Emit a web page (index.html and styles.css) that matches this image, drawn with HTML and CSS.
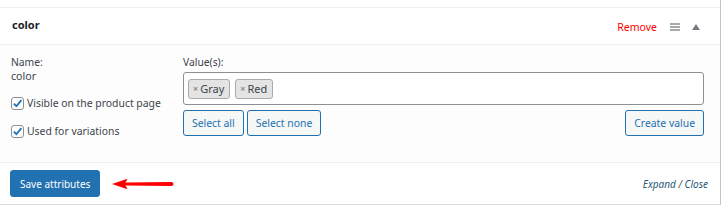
FILE: index.html
```
<!DOCTYPE html>
<html lang="en">
<head>
    <meta charset="UTF-8">
    <title>Product attributes</title>
    <link rel="stylesheet" href="styles.css">
</head>
<body>
    <div class="panel">
        <div class="prev-row"></div>

        <div class="attr">
            <div class="attr-head">
                <strong>color</strong>
                <div class="head-actions">
                    <a class="remove" href="#">Remove</a>
                    <span class="handle">
                        <svg width="10" height="8" viewBox="0 0 10 8"><rect y="0" width="10" height="2" fill="#a7aaad"/><rect y="3" width="10" height="2" fill="#a7aaad"/><rect y="6" width="10" height="2" fill="#a7aaad"/></svg>
                    </span>
                    <span class="toggle">
                        <svg width="8" height="6" viewBox="0 0 8 6"><path d="M4 0 L8 6 L0 6 Z" fill="#787c82"/></svg>
                    </span>
                </div>
            </div>

            <div class="attr-body">
                <div class="col-name">
                    <label class="lbl">Name:</label>
                    <div class="name-val">color</div>
                    <label class="check"><span class="box"><svg width="11" height="11" viewBox="0 0 12 12"><path d="M2 6.2 L4.8 9 L10.2 2.4" fill="none" stroke="#2271b1" stroke-width="2"/></svg></span>Visible on the product page</label>
                    <label class="check"><span class="box"><svg width="11" height="11" viewBox="0 0 12 12"><path d="M2 6.2 L4.8 9 L10.2 2.4" fill="none" stroke="#2271b1" stroke-width="2"/></svg></span>Used for variations</label>
                </div>
                <div class="col-values">
                    <label class="lbl">Value(s):</label>
                    <div class="select-box">
                        <span class="tag"><span class="x">×</span>Gray</span>
                        <span class="tag"><span class="x">×</span>Red</span>
                    </div>
                    <div class="value-actions">
                        <button class="btn">Select all</button>
                        <button class="btn">Select none</button>
                        <button class="btn push">Create value</button>
                    </div>
                </div>
            </div>
        </div>

        <div class="toolbar">
            <button class="btn-primary">Save attributes</button>
            <svg class="arrow" width="64" height="12" viewBox="0 0 66 12"><path d="M1 6 L17 0.5 L15 4.5 L62 4 Q64.5 4 64.5 6 Q64.5 8 62 8 L15 7.5 L17 11.5 Z" fill="#f00"/></svg>
            <span class="expand"><a href="#">Expand</a> / <a href="#">Close</a></span>
        </div>
    </div>
</body>
</html>
```

FILE: styles.css
```
body {
    margin: 0;
    background: #fff;
    font-family: "Noto Sans", "Open Sans", sans-serif;
    font-size: 10.3px;
    color: #3c434a;
}
.panel {
    width: 720px;
    border-right: 1px solid #c3c4c7;
    border-bottom: 1px solid #dcdcde;
    height: 204px;
}
.prev-row {
    height: 7px;
    border-bottom: 1px solid #eee;
}
.attr-head {
    height: 36px;
    display: flex;
    align-items: center;
    justify-content: space-between;
    padding: 0 12px 0 12px;
    border-bottom: 1px solid #eee;
}
.attr-head strong {
    font-size: 11px;
    color: #1d2327;
    margin-top: -3px;
}
.head-actions {
    display: flex;
    align-items: center;
    margin-top: 2px;
}
.remove {
    color: #f00;
    font-size: 10.5px;
    text-decoration: none;
    margin-right: 13px;
}
.handle {
    display: flex;
    margin-right: 12px;
}
.toggle {
    display: flex;
    margin-right: 8px;
}
.attr-body {
    background: #fdfdfd;
    display: flex;
    padding: 10px 16px 0 11px;
    height: 107px;
    border-bottom: 1px solid #eee;
}
.col-name {
    width: 172px;
}
.lbl {
    display: block;
    line-height: 14px;
}
.name-val {
    font-size: 10.6px;
    line-height: 14px;
    margin-bottom: 13px;
}
.check {
    display: flex;
    align-items: center;
    height: 14px;
    margin-bottom: 14px;
    font-size: 10.4px;
}
.box {
    width: 11px;
    height: 11px;
    border: 1px solid #8c8f94;
    border-radius: 3px;
    background: #fff;
    margin-right: 3px;
    display: flex;
}
.col-values {
    flex: 1;
}
.select-box {
    margin-top: 3px;
    height: 31px;
    border: 1px solid #8c8f94;
    border-radius: 3px;
    background: #fff;
    display: flex;
    align-items: center;
    gap: 5px;
    padding: 0 4px;
}
.tag {
    height: 18px;
    background: #e4e4e4;
    border: 1px solid #aaa;
    border-radius: 3px;
    padding: 0 5px 0 4px;
    display: flex;
    align-items: center;
    color: #3c434a;
    font-size: 11px;
}
.x {
    color: #888;
    font-size: 9px;
    margin-right: 2px;
    font-weight: bold;
}
.value-actions {
    display: flex;
    gap: 3px;
    margin-top: 5px;
}
.btn {
    height: 26px;
    padding: 0 8px;
    font-family: inherit;
    font-size: 10.4px;
    color: #2271b1;
    border: 1px solid #2271b1;
    border-radius: 3px;
    background: #f6f7f7;
}
.push {
    margin-left: auto;
}
.toolbar {
    height: 41px;
    display: flex;
    align-items: center;
    padding: 0 12px 0 10px;
}
.btn-primary {
    height: 27px;
    padding: 0 9px;
    font-family: inherit;
    font-size: 10px;
    color: #fff;
    background: #2271b1;
    border: 1px solid #2271b1;
    border-radius: 3px;
}
.arrow {
    margin-left: 11px;
}
.expand {
    margin-left: auto;
    font-style: italic;
    font-size: 10px;
    color: #50575e;
}
.expand a {
    color: #2c5777;
    text-decoration: none;
}
```
